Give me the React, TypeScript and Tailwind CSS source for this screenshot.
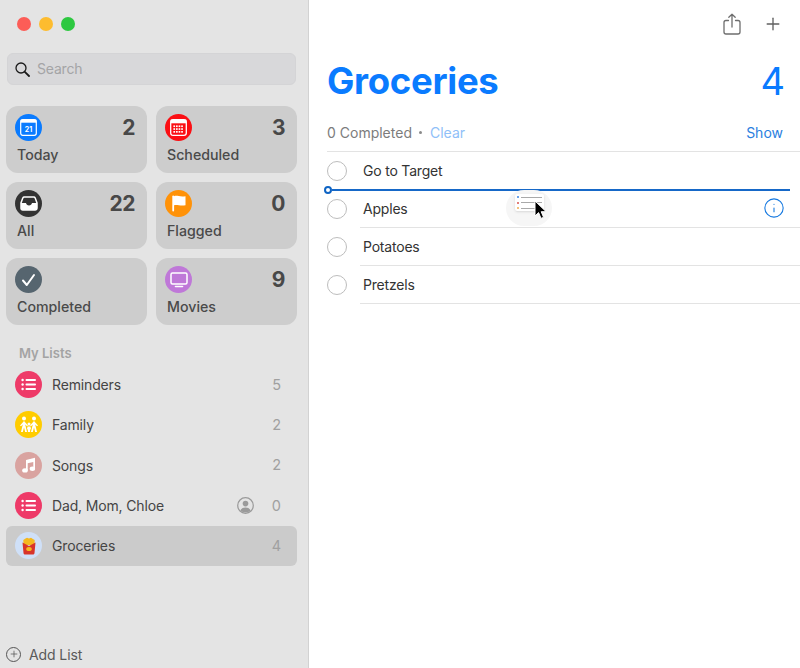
import React from "react";
import { Plus, Info } from "lucide-react";

const ListGlyph = () => (
  <svg width="15" height="13" viewBox="0 0 15 13" fill="#fff">
    <circle cx="1.6" cy="2" r="1.2" />
    <circle cx="1.6" cy="6.5" r="1.2" />
    <circle cx="1.6" cy="11" r="1.2" />
    <rect x="4.5" y="1.1" width="10.5" height="1.8" rx="0.9" />
    <rect x="4.5" y="5.6" width="10.5" height="1.8" rx="0.9" />
    <rect x="4.5" y="10.1" width="10.5" height="1.8" rx="0.9" />
  </svg>
);

const SearchGlyph = () => (
  <svg width="15" height="15" viewBox="0 0 15 15" fill="none" stroke="#1a1a1a" strokeLinecap="round">
    <circle cx="6" cy="6" r="5" strokeWidth="1.3" />
    <path d="M9.8 9.800 14 14" strokeWidth="1.800" />
  </svg>
);

const TodayGlyph = () => (
  <svg width="17" height="17" viewBox="0 0 17 17">
    <rect x="0.7" y="0.7" width="15.6" height="15.6" rx="2" fill="none" stroke="#fff" strokeWidth="1.2" />
    <rect x="0.7" y="0.7" width="15.6" height="3" fill="#fff" />
    <text x="8.5" y="12.800" textAnchor="middle" fontSize="7" fontWeight="700" fill="#fff" fontFamily="Inter, sans-serif">21</text>
  </svg>
);

const ScheduledGlyph = () => (
  <svg width="17" height="17" viewBox="0 0 17 17" fill="#fff">
    <rect x="0.7" y="0.7" width="15.6" height="15.6" rx="2.4" fill="none" stroke="#fff" strokeWidth="1.3" />
    <rect x="0.7" y="0.7" width="15.6" height="3.6" />
    {[6.4, 9.2, 12].map((y) =>
      [3.4, 6, 8.6, 11.2].map((x) => <rect key={`${x}-${y}`} x={x} y={y} width="1.7" height="1.7" />)
    )}
  </svg>
);

const InboxGlyph = () => (
  <svg width="18" height="15" viewBox="0 0 18 15">
    <path d="M4.300 1h9.400c.7 0 1.200.3 1.500 1L17 7v5.300c0 1-.7 1.700-1.700 1.700H2.700C1.700 14 1 13.300 1 12.300V7l1.800-5c.3-.7.800-1 1.500-1z" fill="#333" stroke="#fff" strokeWidth="1.500" />
    <path d="M1 7h5c.3 1.600 1.400 2.500 3 2.500S11.700 8.600 12 7h5v5.300c0 1-.7 1.700-1.700 1.700H2.700C1.700 14 1 13.300 1 12.300z" fill="#fff" />
  </svg>
);

const FlagGlyph = () => (
  <svg width="14" height="17" viewBox="0 0 14 17" fill="#fff">
    <rect x="0.3" y="0.5" width="1.800" height="16" rx="0.9" />
    <path d="M2 1.200c3-1.300 5.500 1.100 11.500 0v9c-5 1.300-8-1-11.500 0z" />
  </svg>
);

const CheckGlyph = () => (
  <svg width="15" height="14" viewBox="0 0 15 14" fill="none" stroke="#fff" strokeWidth="2" strokeLinecap="round" strokeLinejoin="round">
    <path d="M2 7.500 5.800 12 13 2" />
  </svg>
);

const TvGlyph = () => (
  <svg width="18" height="16" viewBox="0 0 18 16" fill="none" stroke="#fff">
    <rect x="1" y="1" width="16" height="11" rx="1.500" strokeWidth="1.500" />
    <path d="M5.500 14.500h7" strokeWidth="1.600" strokeLinecap="round" />
  </svg>
);

const FamilyGlyph = () => (
  <svg width="22" height="18" viewBox="0 0 22 18" fill="#fff">
    <circle cx="6" cy="2.500" r="2" />
    <circle cx="16" cy="2.500" r="2" />
    <circle cx="11" cy="8" r="1.500" />
    <path d="M6 5 2 9.500l1 .8 1.800-1.800L3 16h1.800L6 11.500 7.200 16H9L7.200 8.500 9 10.300l1-.8z" />
    <path d="M16 5l4 4.500-1 .8-1.800-1.800L19 16h-1.800L16 11.500 14.800 16H13l1.800-7.500L13 10.300l-1-.8z" />
    <path d="M9.500 10.500h3l.5 2.800-.9.300V16h-2.200v-2.400L9 13.300z" />
  </svg>
);

const MusicGlyph = () => (
  <svg width="14" height="16" viewBox="0 0 14 16" fill="#fff">
    <path d="M4 3 13 .8v11h-1.700V5L5.700 6.300v7.200H4z" />
    <ellipse cx="3" cy="13.400" rx="2.800" ry="2.200" />
    <ellipse cx="10.400" cy="11.700" rx="2.700" ry="2.200" />
  </svg>
);

const FriesGlyph = () => (
  <svg width="16" height="18" viewBox="0 0 16 18">
    <path d="M2.500 8 2.300 3 4.500 1.500 6 .8l2 .7 2-.7 1.500.9L13.700 3l-.2 5z" fill="#f5b81f" />
    <path d="M1.500 5.500 8 9l6.500-3.500L13.500 16c-.1 1-.9 1.500-1.700 1.500H4.200c-.8 0-1.600-.5-1.700-1.500z" fill="#d8342a" />
    <ellipse cx="8" cy="12" rx="2.800" ry="2" fill="#f5b81f" />
  </svg>
);

const SharedGlyph = () => (
  <svg width="17" height="17" viewBox="0 0 17 17" className="mr-[18px]">
    <circle cx="8.500" cy="8.500" r="7.800" fill="none" stroke="#9a9a9a" strokeWidth="1.200" />
    <circle cx="8.500" cy="6.600" r="2.800" fill="#9a9a9a" />
    <path d="M3.400 13.500c.8-2 2.800-3 5.100-3s4.300 1 5.100 3a7.300 7.300 0 0 1-10.200 0z" fill="#9a9a9a" />
  </svg>
);

const Badge = ({ color, children }: { color: string; children: React.ReactNode }) => (
  <span className={`flex h-[27px] w-[27px] shrink-0 items-center justify-center rounded-full ${color}`}>{children}</span>
);

const cards = [
  { label: "Today", count: "2", color: "bg-[#0a7bff]", icon: <TodayGlyph /> },
  { label: "Scheduled", count: "3", color: "bg-[#fb0f14]", icon: <ScheduledGlyph /> },
  { label: "All", count: "22", color: "bg-[#333333]", icon: <InboxGlyph /> },
  { label: "Flagged", count: "0", color: "bg-[#ff9208]", icon: <FlagGlyph /> },
  { label: "Completed", count: "", color: "bg-[#56656f]", icon: <CheckGlyph /> },
  { label: "Movies", count: "9", color: "bg-[#bf78d8]", icon: <TvGlyph /> },
];

const lists = [
  { label: "Reminders", count: "5", color: "bg-[#ee3a68]", icon: <ListGlyph /> },
  { label: "Family", count: "2", color: "bg-[#ffcc00]", icon: <FamilyGlyph /> },
  { label: "Songs", count: "2", color: "bg-[#d9a3a0]", icon: <MusicGlyph /> },
  { label: "Dad, Mom, Chloe", count: "0", color: "bg-[#ee3a68]", icon: <ListGlyph />, shared: true },
  { label: "Groceries", count: "4", color: "bg-[#cfe0f8]", icon: <FriesGlyph />, selected: true },
];

const reminders = [
  { text: "Go to Target", line: false },
  { text: "Apples", line: true, info: true },
  { text: "Potatoes", line: true },
  { text: "Pretzels", line: true },
];

export default function App() {
  return (
    <div className="flex h-[668px] w-[800px] overflow-hidden bg-white font-['Inter',sans-serif] text-[#3c3c3c] antialiased">
      <aside className="flex w-[309px] shrink-0 flex-col border-r border-[#d2d2d2] bg-[#e4e4e4] pl-[6px] pr-[11px]">
        <div className="flex h-[53px] shrink-0 items-start gap-[8px] pl-[11px] pt-[17px]">
          <span className="h-[14px] w-[14px] rounded-full bg-[#fc5d57]" />
          <span className="h-[14px] w-[14px] rounded-full bg-[#fdbc2f]" />
          <span className="h-[14px] w-[14px] rounded-full bg-[#2dc840]" />
        </div>
        <div className="ml-px mr-px flex h-[32px] shrink-0 items-center gap-[7px] rounded-[6px] border border-[#d4d4d6] bg-[#d8d8da] pl-[7px]">
          <SearchGlyph />
          <span className="pb-[2px] text-[14px] tracking-[-0.2px] text-[#a4a4a6]">Search</span>
        </div>
        <div className="mt-[21px] grid shrink-0 grid-cols-[141px_141px] gap-x-[9px] gap-y-[9.500px]">
          {cards.map((c) => (
            <div key={c.label} className="flex h-[66.500px] flex-col rounded-[12px] bg-[#cdcdcd] pl-[9px] pr-[12px] pt-[8px]">
              <div className="flex h-[27px] items-center justify-between">
                <Badge color={c.color}>{c.icon}</Badge>
                <span className="text-[21px] font-bold leading-none tracking-[-0.5px] text-[#484848]">{c.count}</span>
              </div>
              <span className="ml-[2px] mt-[4px] text-[14.200px] font-medium leading-[20px] text-[#4a4a4a]">{c.label}</span>
            </div>
          ))}
        </div>
        <div className="mt-[19px] h-[21px] shrink-0 pl-[13px] text-[13px] font-semibold leading-[18px] text-[#a3a3a3]">My Lists</div>
        <div className="flex shrink-0 flex-col">
          {lists.map((l) => (
            <div key={l.label} className={`flex h-[40.300px] items-center rounded-[6px] pl-[9px] pr-[16px] ${l.selected ? "bg-[#cbcbcb]" : ""}`}>
              <Badge color={l.color}>{l.icon}</Badge>
              <span className="ml-[10px] flex-1 text-[14px] tracking-[-0.15px] text-[#454545]">{l.label}</span>
              {l.shared && <SharedGlyph />}
              <span className="text-[14.500px] text-[#a0a0a0]">{l.count}</span>
            </div>
          ))}
        </div>
        <div className="mt-auto flex h-[28px] shrink-0 items-center gap-[8px]">
          <span className="flex h-[15px] w-[15px] items-center justify-center rounded-full border border-[#555555]">
            <Plus size={10} strokeWidth={1.800} className="text-[#555555]" />
          </span>
          <span className="text-[14px] tracking-[-0.1px] text-[#5a5a5a]">Add List</span>
        </div>
      </aside>

      <main className="relative flex min-w-0 flex-1 flex-col pl-[18px]">
        <div className="flex h-[47px] shrink-0 items-center justify-end gap-[22px] pr-[17px]">
          <svg width="18" height="22" viewBox="0 0 18 22" fill="none" stroke="#6e6e6e" strokeWidth="1.300" strokeLinecap="round" strokeLinejoin="round">
            <path d="M5.500 7.500H3a2 2 0 0 0-2 2V19a2 2 0 0 0 2 2h12a2 2 0 0 0 2-2V9.500a2 2 0 0 0-2-2h-2.500" />
            <path d="M9 14V1.200M5.800 4.300 9 1.200l3.200 3.100" />
          </svg>
          <Plus size={20} strokeWidth={1.600} className="text-[#606060]" />
        </div>
        <div className="flex h-[68px] shrink-0 items-center justify-between pr-[15px]">
          <h1 className="text-[36.500px] font-bold leading-none tracking-[-0.3px] text-[#0a7bff]">Groceries</h1>
          <span className="text-[38px] font-normal leading-none text-[#0a7bff]">4</span>
        </div>
        <div className="flex h-[37px] shrink-0 items-center justify-between border-b border-[#e3e3e3] pb-[2px] pr-[17px] text-[14px]">
          <div className="flex items-center">
            <span className="text-[#7c7c7c]">0 Completed</span>
            <span className="ml-[7px] h-[3px] w-[3px] rounded-full bg-[#8a8a8a]" />
            <span className="ml-[8px] text-[#8fc0f8]">Clear</span>
          </div>
          <span className="text-[#2a80e0]">Show</span>
        </div>
        <div className="flex flex-col">
          {reminders.map((r) => (
            <div key={r.text} className="flex h-[38px] items-center">
              <span className="h-[20px] w-[20px] shrink-0 rounded-full border border-[#bdbdbd]" />
              <div className={`ml-[13px] flex h-full flex-1 items-center justify-between border-b pl-[3px] pr-[15px] ${r.line ? "border-[#e3e3e3]" : "border-transparent"}`}>
                <span className="text-[14px] tracking-[-0.2px] text-[#333333]">{r.text}</span>
                {r.info && <Info size={22} strokeWidth={1.200} className="mb-[1px] text-[#1679e0]" />}
              </div>
            </div>
          ))}
        </div>

        <div className="absolute left-[15px] top-[186px] flex w-[466px] items-center">
          <span className="h-[8px] w-[8px] shrink-0 rounded-full border-2 border-[#0f64c4] bg-white" />
          <span className="h-[2px] flex-1 bg-[#1668c8]" />
        </div>

        <div className="absolute left-[197px] top-[190px] flex h-[36px] w-[46px] items-start justify-center rounded-full bg-[#f6f6f6] pt-[4px]">
          <div className="flex h-[17px] w-[29px] flex-col justify-between rounded-[2px] bg-white px-[2px] py-[2px] shadow-sm">
            {["bg-[#3b82e0]", "bg-[#d9534f]", "bg-[#f0ad4e]"].map((c) => (
              <span key={c} className="flex items-center gap-[2px]">
                <span className={`h-[2px] w-[2px] rounded-full ${c}`} />
                <span className="h-px flex-1 bg-[#a9a9a9]" />
              </span>
            ))}
          </div>
        </div>
        <svg className="absolute left-[225px] top-[200px]" width="13" height="20" viewBox="0 0 13 20">
          <path d="M1 1v15l3.600-3.400 2.400 5.800 2.600-1.100-2.400-5.600h5z" fill="#000" stroke="#fff" strokeWidth="1" />
        </svg>
      </main>
    </div>
  );
}
